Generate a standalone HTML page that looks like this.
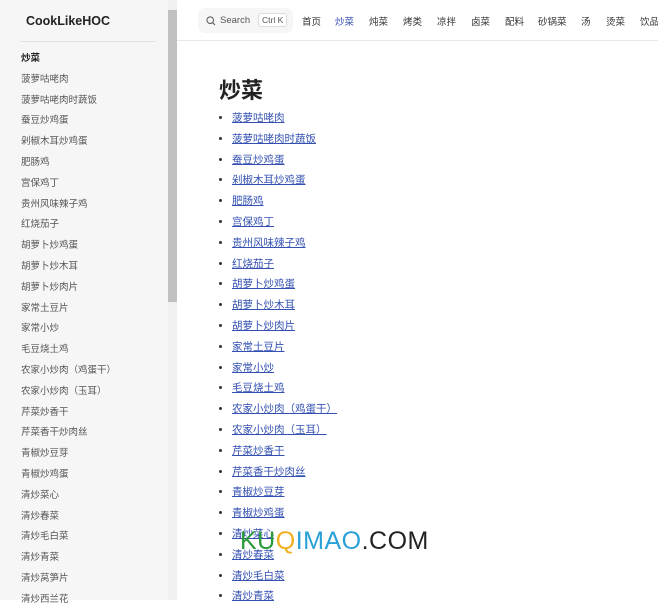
<!DOCTYPE html>
<html><head><meta charset="utf-8"><style>
*{margin:0;padding:0;box-sizing:border-box}
body{width:658px;height:600px;overflow:hidden;background:#fff;font-family:"Liberation Sans","Noto Sans CJK SC",sans-serif;position:relative}
.side{position:absolute;left:0;top:0;width:168px;height:600px;background:#f6f6f7}
.logo{position:absolute;left:26px;top:14px;font-size:12.5px;font-weight:bold;color:#222}
.sline{position:absolute;left:20px;right:12px;top:41px;border-top:1px solid #e2e2e3}
.sitems{position:absolute;left:21px;top:52px;font-size:9.5px;color:#555}
.sitems div{height:20.8px;line-height:14px}
.sitems .h{color:#222;font-weight:bold}
.sb{position:absolute;left:168px;top:0;width:9px;height:600px;background:#f0f0f0}
.thumb{position:absolute;left:168px;top:10px;width:9px;height:292px;background:#c1c1c1}
.nav{position:absolute;left:177px;top:0;right:0;height:41px;border-bottom:1px solid #e8e8e8}
.search{position:absolute;left:198px;top:8px;width:95px;height:25px;background:#f6f6f7;border-radius:7px;font-size:9.5px;color:#555}
.search .t{position:absolute;left:22px;top:7px}
.search .k{position:absolute;left:60px;top:5px;border:1px solid #ddd;border-radius:3px;font-size:8.5px;padding:1px 3px;background:#fff}
.nv{position:absolute;top:14px;font-size:9.5px;color:#333;white-space:nowrap}
h1{position:absolute;left:219px;top:73px;font-size:22px;font-weight:bold;color:#222}
ul{position:absolute;left:232px;top:110px;list-style:disc;font-size:10.5px}
li{height:20.8px;line-height:16px;color:#333}
li a{color:#3451b2;text-decoration:underline}
.wm{position:absolute;left:240px;top:527px;font-size:25px;letter-spacing:0.5px;font-family:"Liberation Sans",sans-serif;white-space:nowrap}
</style></head><body>
<div class="side">
<div class="logo">CookLikeHOC</div><div class="sline"></div>
<div class="sitems">
<div class="h">炒菜</div><div>菠萝咕咾肉</div><div>菠萝咕咾肉时蔬饭</div><div>蚕豆炒鸡蛋</div><div>剁椒木耳炒鸡蛋</div><div>肥肠鸡</div><div>宫保鸡丁</div><div>贵州风味辣子鸡</div><div>红烧茄子</div><div>胡萝卜炒鸡蛋</div><div>胡萝卜炒木耳</div><div>胡萝卜炒肉片</div><div>家常土豆片</div><div>家常小炒</div><div>毛豆烧土鸡</div><div>农家小炒肉（鸡蛋干）</div><div>农家小炒肉（玉耳）</div><div>芹菜炒香干</div><div>芹菜香干炒肉丝</div><div>青椒炒豆芽</div><div>青椒炒鸡蛋</div><div>清炒菜心</div><div>清炒春菜</div><div>清炒毛白菜</div><div>清炒青菜</div><div>清炒莴笋片</div><div>清炒西兰花</div>
</div></div>
<div class="sb"></div><div class="thumb"></div>
<div class="nav"></div>
<div class="search"><svg style="position:absolute;left:8px;top:8px" width="10" height="10" viewBox="0 0 10 10"><circle cx="4.2" cy="4.2" r="3.3" fill="none" stroke="#555" stroke-width="1"/><path d="M6.6 6.6L9 9" stroke="#555" stroke-width="1"/></svg><span class="t">Search</span><span class="k">Ctrl K</span></div>
<span class="nv" style="left:302px">首页</span><span class="nv" style="left:335px;color:#3451b2">炒菜</span><span class="nv" style="left:369px">炖菜</span><span class="nv" style="left:403px">烤类</span><span class="nv" style="left:437px">凉拌</span><span class="nv" style="left:471px">卤菜</span><span class="nv" style="left:505px">配料</span><span class="nv" style="left:538px">砂锅菜</span><span class="nv" style="left:581px">汤</span><span class="nv" style="left:606px">烫菜</span><span class="nv" style="left:640px">饮品</span>
<h1>炒菜</h1>
<ul>
<li><a>菠萝咕咾肉</a></li><li><a>菠萝咕咾肉时蔬饭</a></li><li><a>蚕豆炒鸡蛋</a></li><li><a>剁椒木耳炒鸡蛋</a></li><li><a>肥肠鸡</a></li><li><a>宫保鸡丁</a></li><li><a>贵州风味辣子鸡</a></li><li><a>红烧茄子</a></li><li><a>胡萝卜炒鸡蛋</a></li><li><a>胡萝卜炒木耳</a></li><li><a>胡萝卜炒肉片</a></li><li><a>家常土豆片</a></li><li><a>家常小炒</a></li><li><a>毛豆烧土鸡</a></li><li><a>农家小炒肉（鸡蛋干）</a></li><li><a>农家小炒肉（玉耳）</a></li><li><a>芹菜炒香干</a></li><li><a>芹菜香干炒肉丝</a></li><li><a>青椒炒豆芽</a></li><li><a>青椒炒鸡蛋</a></li><li><a>清炒菜心</a></li><li><a>清炒春菜</a></li><li><a>清炒毛白菜</a></li><li><a>清炒青菜</a></li>
</ul>
<div class="wm"><span style="color:#2a9a3a">KU</span><span style="color:#f0b020">Q</span><span style="color:#2aa0d8">IMAO</span><span style="color:#222">.COM</span></div>
</body></html>
